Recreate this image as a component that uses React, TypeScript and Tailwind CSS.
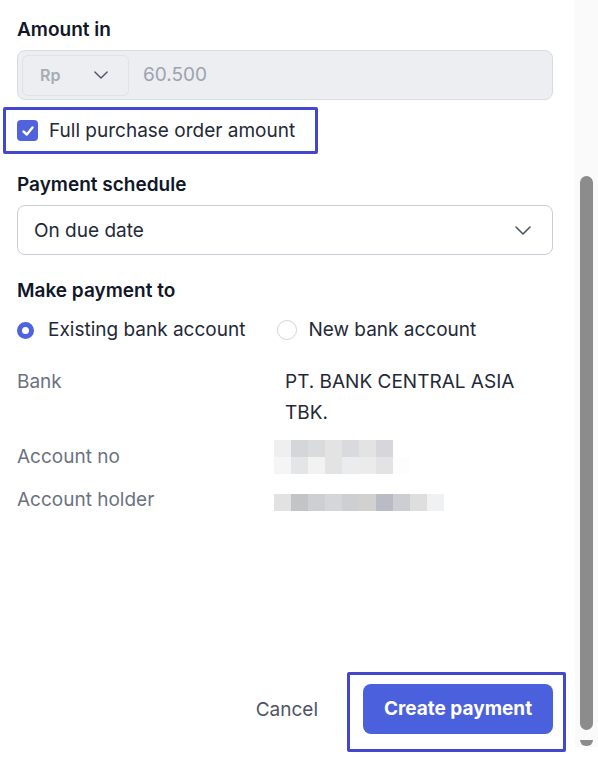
import React from "react";

const accountNoTop = ["bg-[#efefef]", "bg-[#d5d6d9]", "bg-[#dadbdd]", "bg-[#e3e3e3]", "bg-[#d9dadd]", "bg-[#e3e3e3]", "bg-[#d6d7da]"];
const accountNoBottom = ["bg-[#f5f5f5]", "bg-[#e4e5e7]", "bg-[#f1f2f1]", "bg-[#e3e3e3]", "bg-[#ebecee]", "bg-[#ebebeb]", "bg-[#e3e3e5]", "bg-[#fdfdfd]"];
const holderBlocks = ["bg-[#e2e2e2]", "bg-[#c3c4c6]", "bg-[#cdcfd3]", "bg-[#d5d6d8]", "bg-[#cdcfd3]", "bg-[#d3d1cf]", "bg-[#b9bcc5]", "bg-[#cdced3]", "bg-[#dedede]", "bg-[#f0f1f3]"];

function Chevron({ className }: { className: string }) {
  return (
    <svg viewBox="0 0 16 9" fill="none" className={className}>
      <polyline points="1,1 8,8 15,1" stroke="currentColor" strokeWidth="1.6" strokeLinecap="round" strokeLinejoin="round" />
    </svg>
  );
}

// blurred value (pixelated in the screenshot)
function Blur({ rows }: { rows: string[][] }) {
  return (
    <div className="flex flex-col -ml-[11px]">
      {rows.map((r, i) => (
        <div key={i} className="flex">
          {r.map((c, j) => (
            <span key={j} className={`block w-[17px] h-[17px] ${c}`} />
          ))}
        </div>
      ))}
    </div>
  );
}

export default function App() {
  return (
    <div className="flex h-[775px] w-[598px] bg-white font-['Inter','Noto_Sans',sans-serif] overflow-hidden">
      <div className="flex flex-col w-[575px] pl-[17px] pr-[22px] pt-[18px] pb-[23px]">
        {/* Amount */}
        <p className="text-[19px] leading-[24px] font-semibold text-[#0f1729]">Amount in</p>
        <div className="mt-[8px] h-[50px] flex items-center rounded-[8px] border border-[#d8dce1] bg-[#eceef1] pl-[4px]">
          <div className="flex items-center justify-between w-[107px] h-[41px] rounded-[6px] border border-[#dfe2e6] pl-[17px] pr-[20px]">
            <span className="text-[16px] font-semibold text-[#a6acb5]">Rp</span>
            <Chevron className="w-[14px] h-[8px] text-[#4b5563]" />
          </div>
          <span className="ml-[14px] text-[19px] text-[#9ca3af]">60.500</span>
        </div>

        <div className="mt-[7px] -ml-[14px] w-[315px] h-[47px] rounded-[2px] border-[3px] border-[#4347cf] flex items-center pl-[11px]">
          <span className="flex items-center justify-center w-[21px] h-[21px] rounded-[4px] bg-[#4f63dc]">
            <svg viewBox="0 0 14 14" className="w-[14px] h-[14px]" fill="none">
              <polyline points="2.5,7.5 5.8,10.5 11.5,3.5" stroke="white" strokeWidth="2.4" strokeLinecap="round" strokeLinejoin="round" />
            </svg>
          </span>
          <span className="ml-[11px] pt-[2px] text-[19px] text-[#1f2937]">Full purchase order amount</span>
        </div>

        {/* Schedule */}
        <p className="mt-[19px] text-[19px] leading-[24px] font-semibold text-[#0f1729]">Payment schedule</p>
        <div className="mt-[8px] h-[50px] flex items-center justify-between rounded-[8px] border border-[#c9ced6] bg-white pl-[16px] pr-[21px]">
          <span className="pt-[2px] text-[19px] text-[#1f2937]">On due date</span>
          <Chevron className="w-[16px] h-[9px] text-[#4b5563]" />
        </div>

        {/* Payee */}
        <p className="mt-[24px] text-[19px] leading-[24px] font-semibold text-[#0f1729]">Make payment to</p>
        <div className="mt-[14px] flex items-center h-[26px]">
          <span className="w-[17px] h-[17px] rounded-full border-[5px] border-[#4f63dc] bg-white" />
          <span className="ml-[14px] text-[19px] text-[#1f2937]">Existing bank account</span>
          <span className="ml-[32px] w-[20px] h-[20px] rounded-full border-[1.5px] border-[#d1d5db] bg-white" />
          <span className="ml-[11px] text-[19px] text-[#1f2937]">New bank account</span>
        </div>

        <div className="mt-[23px] grid grid-cols-[268px_1fr] gap-y-[12px] text-[19px] leading-[31px]">
          <span className="text-[#6b7280]">Bank</span>
          <span className="text-[#1f2937] w-[250px]">PT. BANK CENTRAL ASIA TBK.</span>
          <span className="text-[#6b7280] pt-[1px]">Account no</span>
          <div>
            <Blur rows={[accountNoTop, accountNoBottom]} />
          </div>
          <span className="text-[#6b7280] -mt-[2px]">Account holder</span>
          <div className="flex items-center pt-[4px]">
            <Blur rows={[holderBlocks]} />
          </div>
        </div>

        {/* Footer */}
        <div className="mt-auto flex items-center justify-end">
          <button className="text-[19px] text-[#4b5563] mr-[29px] mb-[4px]">Cancel</button>
          <div className="-mr-[13px] w-[219px] h-[80px] rounded-[2px] border-[3px] border-[#4347cf] pl-[13px] pt-[9px]">
            <button className="w-[190px] h-[50px] rounded-[8px] bg-[#4b60dc] pt-[1px] text-white text-[19px] font-bold">
              Create payment
            </button>
          </div>
        </div>
      </div>

      {/* scrollbar */}
      <div className="w-[23px] h-[747px] bg-[#fafafa] flex flex-col items-center pt-[176px]">
        <div className="w-[13px] h-[554px] rounded-full bg-[#8c8c8c]" />
        <div className="mt-[10px] w-[13px] h-[6px] rounded-b-full bg-[#8c8c8c]" />
      </div>
    </div>
  );
}
